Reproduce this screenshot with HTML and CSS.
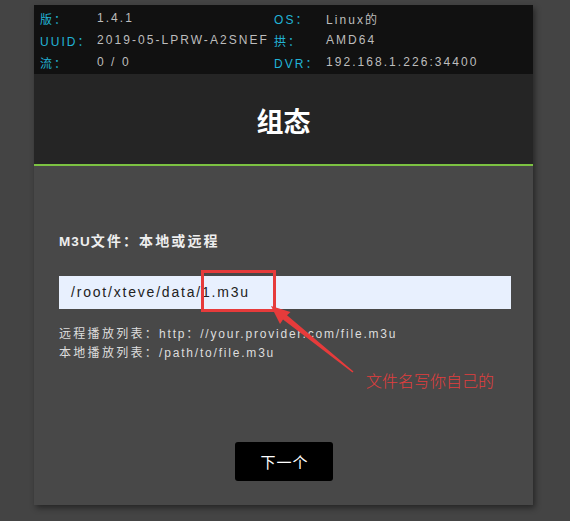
FILE: index.html
```html
<!DOCTYPE html>
<html lang="zh">
<head>
<meta charset="utf-8">
<title>xTeVe 组态</title>
<link rel="stylesheet" href="styles.css">
</head>
<body>
<div class="card">
  <div class="info">
    <span class="lbl">版：</span><span class="val">1.4.1</span>
    <span class="lbl">OS：</span><span class="val">Linux的</span>
    <span class="lbl">UUID：</span><span class="val">2019-05-LPRW-A2SNEF</span>
    <span class="lbl">拱：</span><span class="val">AMD64</span>
    <span class="lbl">流：</span><span class="val">0 / 0</span>
    <span class="lbl">DVR：</span><span class="val">192.168.1.226:34400</span>
  </div>
  <div class="titlebar"><h1>组态</h1></div>
  <div class="content">
    <div class="field-label">M3U<span class="cj">文件：本地或远程</span></div>
    <div class="input">/root/xteve/data/1.m3u</div>
    <div class="hints">
      <div><span class="cj">远程播放列表：</span>http：//your.provider.com/file.m3u</div>
      <div><span class="cj">本地播放列表：</span>/path/to/file.m3u</div>
    </div>
    <div class="actions"><button class="btn">下一个</button></div>
  </div>
</div>
<svg class="annot" width="570" height="521" viewBox="0 0 570 521">
  <rect x="202.5" y="271.5" width="72" height="39" fill="none" stroke="#e63b3b" stroke-width="3"/>
  <polygon points="271,306 290.5,312 287,315.2 353.5,371.5 352.5,372.5 283,319.6 280,324" fill="#e63b3b"/>
</svg>
<div class="note">文件名写你自己的</div>
</body>
</html>
```
FILE: styles.css
```css
html, body {
  margin: 0;
  padding: 0;
}
body {
  background: #444444;
  width: 570px;
  height: 521px;
  overflow: hidden;
  position: relative;
  font-family: "Liberation Sans", Arial, "Noto Sans CJK SC", sans-serif;
}
.card {
  margin: 5px 0 0 34px;
  width: 499px;
  height: 500px;
  background: #484848;
  box-shadow: 2px 3px 6px rgba(0, 0, 0, 0.45);
  display: flex;
  flex-direction: column;
}
.info {
  background: #111111;
  display: grid;
  grid-template-columns: 57px 177px 52px 1fr;
  grid-auto-rows: 22px;
  align-items: center;
  padding: 2px 0 1px 6px;
  font-size: 12px;
  letter-spacing: 2.05px;
}
.lbl {
  color: #21b3d6;
}
.val {
  color: #bdbdbd;
}
.titlebar {
  background: #252525;
  height: 90px;
  border-bottom: 2px solid #7cc242;
  display: flex;
  align-items: center;
  justify-content: center;
}
.titlebar h1 {
  margin: 3px 0 0 0;
  color: #ffffff;
  font-size: 27px;
  font-weight: bold;
}
.content {
  padding: 66px 0 0 25px;
  flex: 1;
}
.field-label {
  color: #eeeeee;
  font-size: 13.5px;
  font-weight: bold;
  letter-spacing: 1.1px;
  line-height: 18px;
}
.field-label .cj {
  font-size: 14px;
  letter-spacing: 2.1px;
}
.input {
  margin-top: 25px;
  width: 440px;
  height: 33px;
  background: #e8f0fe;
  color: #222222;
  font-size: 14px;
  letter-spacing: 1.8px;
  line-height: 33px;
  padding-left: 12px;
}
.hints {
  margin-top: 16px;
  color: #dddddd;
  font-size: 12px;
  letter-spacing: 1.8px;
  line-height: 19px;
}
.hints .cj {
  letter-spacing: 2.3px;
}
.actions {
  margin-top: 79px;
  padding-left: 176px;
}
.btn {
  width: 98px;
  height: 39px;
  background: #000000;
  border: none;
  border-radius: 3px;
  color: #ffffff;
  font-family: "Liberation Sans", Arial, "Noto Sans CJK SC", sans-serif;
  font-size: 15px;
  letter-spacing: 1px;
  padding: 0 0 0 1px;
}
.annot {
  position: absolute;
  left: 0;
  top: 0;
  pointer-events: none;
}
.note {
  position: absolute;
  left: 366px;
  top: 368px;
  color: #e23e3e;
  font-size: 16px;
  font-family: "Noto Sans CJK SC", sans-serif;
  font-weight: 300;
}
```
